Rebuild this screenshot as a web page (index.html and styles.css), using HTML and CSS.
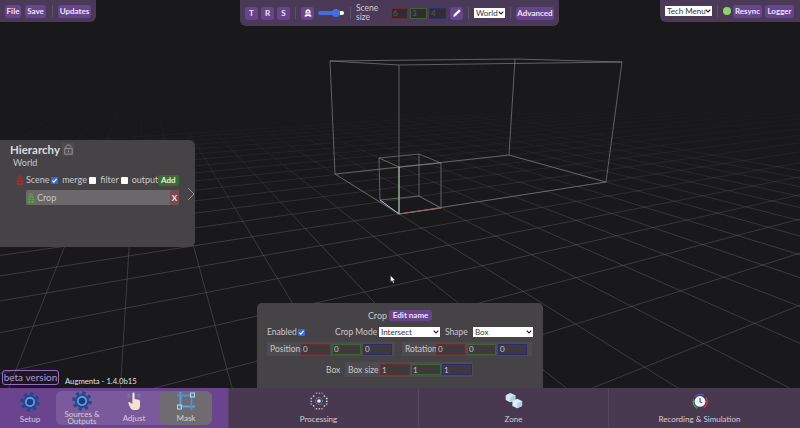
FILE: index.html
```html
<!DOCTYPE html>
<html lang="en">
<head>
<meta charset="utf-8">
<title>Augmenta</title>
<link rel="stylesheet" href="styles.css">
</head>
<body>
<div class="app">
  <svg class="scene" viewBox="0 0 800 428" aria-hidden="true">
    <defs>
      <linearGradient id="fade" gradientUnits="userSpaceOnUse" x1="0" y1="85" x2="0" y2="240">
        <stop offset="0" stop-color="#000"/>
        <stop offset="0.3" stop-color="#222"/>
        <stop offset="1" stop-color="#fff"/>
      </linearGradient>
      <mask id="fade-mask" maskUnits="userSpaceOnUse" x="0" y="0" width="800" height="428">
        <rect width="800" height="428" fill="url(#fade)"/>
      </mask>
    </defs>
    <g mask="url(#fade-mask)" class="grid">
      <path d="M141 53L-1255 428M141 53L-1130 428M141 53L-1005 428M141 53L-880 428M141 53L-756 428M141 53L-631 428M141 53L-506 428M141 53L-381 428M141 53L-256 428M141 53L-132 428M141 53L-7 428M141 53L118 428M141 53L243 428M141 53L368 428M141 53L492 428M141 53L617 428M141 53L742 428M141 53L867 428M141 53L992 428M141 53L1116 428M141 53L1241 428M141 53L1366 428M141 53L1491 428M141 53L1616 428M141 53L1740 428M141 53L1865 428M141 53L1990 428M141 53L2115 428M141 53L2240 428"/>
      <path d="M1430 54L983 428M1430 54L738 428M1430 54L492 428M1430 54L247 428M1430 54L2 428M1430 54L-244 428M1430 54L-489 428M1430 54L-735 428M1430 54L-980 428M1430 54L-1225 428M1430 54L-1471 428M1430 54L-1716 428M1430 54L-1962 428M1430 54L-2207 428M1430 54L-2452 428M1430 54L-2698 428M1430 54L-2943 428M1430 54L-3189 428M1430 54L-3434 428M1430 54L-3679 428M1430 54L-3925 428M1430 54L-4170 428M1430 54L-4416 428"/>
    </g>
    <path class="wire" d="M330 61L399 65L622 62L515 59L330 61M330 61L335 174L399 214L606 182L509 155L335 174M399 65V214M622 62L606 182M515 59L509 155"/>
    <path class="wire" d="M379 158L419 154L441 163L399 167L379 158M379 158L380 200L399 214L441 208L419 196L380 200M441 163V208M419 154V196"/>
    <path class="axis-g" d="M399 167V214"/>
    <path class="axis-r" d="M399 214L441 208"/>
    <path class="axis-b" d="M380 200L399 214"/>
  </svg>

  <svg class="cursor" viewBox="0 0 6 9" aria-hidden="true"><path d="M0.5 0.5V7L2 5.6L3.2 8.2L4.3 7.7L3.2 5.2H5.2Z"/></svg>

  <div class="panel top-left">
    <button class="btn">File</button>
    <button class="btn">Save</button>
    <span class="sep"></span>
    <button class="btn">Updates</button>
  </div>

  <div class="panel top-center">
    <button class="btn square">T</button>
    <button class="btn square">R</button>
    <button class="btn square">S</button>
    <span class="sep"></span>
    <button class="btn square icon-btn">
      <svg viewBox="0 0 12 12" width="10" height="10"><path d="M3 6.5V4.5C3 2.8 4.3 1.5 6 1.5S9 2.8 9 4.5V6.5Z" fill="#fff"/><circle cx="6" cy="4.4" r="1" fill="#6a4390"/><path d="M1.5 10L3.2 7.5H8.8L10.5 10L8.5 10.6L6 9.4L3.5 10.6Z" fill="#fff"/></svg>
    </button>
    <input class="slider" type="range" min="0" max="100" value="75" aria-label="Speed">
    <span class="sep"></span>
    <span class="scene-size">Scene size</span>
    <span class="size-inputs">
      <input class="field red dim" value="6" aria-label="X">
      <input class="field green dim" value="3" aria-label="Y">
      <input class="field blue dim" value="4" aria-label="Z">
    </span>
    <button class="btn square icon-btn">
      <svg viewBox="0 0 12 12" width="10" height="10"><path d="M1.5 10.5L2.2 7.8L8.4 1.6L10.4 3.6L4.2 9.8Z" fill="#fff"/></svg>
    </button>
    <span class="sep"></span>
    <select class="select world" aria-label="Space"><option>World</option></select>
    <span class="sep"></span>
    <button class="btn advanced">Advanced</button>
  </div>

  <div class="panel top-right">
    <select class="select tech" aria-label="Tech menu"><option>Tech Menu</option></select>
    <span class="sep"></span>
    <span class="status"></span>
    <button class="btn">Resync</button>
    <button class="btn">Logger</button>
  </div>

  <section class="hierarchy">
    <header class="h-title">
      <h1>Hierarchy</h1>
      <span class="h-lock">
        <svg viewBox="0 0 12 12" width="11" height="11"><path d="M3.2 5V3C3.2 1.8 4.4 1 6 1S8.8 1.8 8.8 3V3.6" fill="none" stroke="#9a989b" stroke-width="1"/><rect x="2" y="5" width="8" height="6" fill="none" stroke="#9a989b"/><rect x="5.3" y="7" width="1.4" height="2" fill="#9a989b"/></svg>
      </span>
    </header>
    <div class="h-world">World</div>
    <div class="h-row">
      <svg class="node-icon" viewBox="0 0 8 10" width="8" height="10"><path d="M2.6 2V1H5.4V2" fill="none" stroke="#9a3434"/><path d="M1 10C0.3 6 0.8 2 4 2S7.7 6 7 10Z" fill="#9a3434"/><path d="M1 5H7M1 7.5H7M4 2V10" stroke="#5a2c2e" stroke-width="0.4"/></svg>
      <span class="h-scene">Scene</span>
      <input class="check" type="checkbox" checked aria-label="merge">
      <span class="h-merge">merge</span>
      <input class="check" type="checkbox" aria-label="filter">
      <span class="h-filter">filter</span>
      <input class="check" type="checkbox" aria-label="output">
      <span class="h-output">output</span>
      <button class="add">Add</button>
    </div>
    <div class="h-node">
      <svg class="node-icon" viewBox="0 0 8 10" width="8" height="10"><path d="M2.6 2V1H5.4V2" fill="none" stroke="#5fa04a"/><path d="M1 10C0.3 6 0.8 2 4 2S7.7 6 7 10Z" fill="#5fa04a"/><path d="M1 5H7M1 7.5H7M4 2V10" stroke="#39602f" stroke-width="0.4"/></svg>
      <span class="node-name">Crop</span>
      <button class="remove">X</button>
    </div>
    <svg class="chevron" viewBox="0 0 8 14" width="8" height="14"><path d="M1 1L7 7L1 13" fill="none" stroke="#8d8b8e" stroke-width="1"/></svg>
  </section>

  <section class="crop">
    <div class="crop-title"><span>Crop</span><button class="btn edit">Edit name</button></div>
    <div class="crop-row">
      <span class="lbl-enabled">Enabled</span>
      <input class="check" type="checkbox" checked aria-label="Enabled">
      <span class="lbl-mode">Crop Mode</span>
      <select class="select mode" aria-label="Crop mode"><option>Intersect</option></select>
      <span class="lbl-shape">Shape</span>
      <select class="select shape" aria-label="Shape"><option>Box</option></select>
    </div>
    <div class="crop-row vectors">
      <div class="vector">
        <span class="vec-label">Position</span>
        <input class="field red" value="0" aria-label="Position X">
        <input class="field green" value="0" aria-label="Position Y">
        <input class="field blue" value="0" aria-label="Position Z">
      </div>
      <div class="vector">
        <span class="vec-label">Rotation</span>
        <input class="field red" value="0" aria-label="Rotation X">
        <input class="field green" value="0" aria-label="Rotation Y">
        <input class="field blue" value="0" aria-label="Rotation Z">
      </div>
    </div>
    <div class="crop-row box-row">
      <span class="lbl-box">Box</span>
      <div class="vector box-vector">
        <span class="vec-label">Box size</span>
        <input class="field red" value="1" aria-label="Box X">
        <input class="field green" value="1" aria-label="Box Y">
        <input class="field blue" value="1" aria-label="Box Z">
      </div>
    </div>
  </section>

  <div class="beta">beta version</div>
  <div class="version">Augmenta - 1.4.0b15</div>

  <nav class="nav">
    <div class="nav-main">
      <a class="tab tab-setup">
        <svg class="tab-icon" viewBox="0 0 24 24" width="20" height="20"><use href="#gear"/></svg>
        <span>Setup</span>
      </a>
      <div class="tab-group">
        <a class="tab">
          <svg class="tab-icon" viewBox="0 0 24 24" width="20" height="20">
            <g id="gear"><circle cx="12" cy="12" r="8.5" fill="#24478c"/><circle cx="12" cy="12" r="10" fill="none" stroke="#24478c" stroke-width="3.4" stroke-dasharray="4 3.85"/><circle cx="12" cy="12" r="5" fill="#1f3c7c" stroke="#5ba6ef" stroke-width="2"/></g>
          </svg>
          <span class="two-line">Sources &amp; Outputs</span>
        </a>
        <a class="tab">
          <svg class="tab-icon" viewBox="0 0 20 20" width="20" height="20">
            <path d="M8.4 8V2.6C8.4 1.2 10.6 1.2 10.6 2.6V8L14.5 8.8C15.8 9.1 16 10 16 11V15C16 17 15 19 12 19H9.5C8 19 7 18 6.2 16.6L4.4 12.5C4 11.4 5.2 10.6 6.2 11.4L8.4 13Z" fill="#f2e2d0"/>
            <path d="M3.5 3L6 4.4M3.5 5.8L6 4.4M16.5 3L13 4.4M16.5 5.8L13 4.4" stroke="#5b8fd6" stroke-width="1" fill="none"/>
          </svg>
          <span>Adjust</span>
        </a>
        <a class="tab active">
          <svg class="tab-icon" viewBox="0 0 20 20" width="20" height="20">
            <path d="M4.5 1V15.5H19" fill="none" stroke="#5ba2e6" stroke-width="1.8"/>
            <path d="M1 4.5H15.5V19" fill="none" stroke="#4f90d8" stroke-width="1.8"/>
            <rect x="1.5" y="14" width="4" height="4" fill="none" stroke="#b5dcf7" stroke-width="1"/>
            <rect x="14.5" y="2" width="4" height="4" fill="none" stroke="#b5dcf7" stroke-width="1"/>
          </svg>
          <span>Mask</span>
        </a>
      </div>
    </div>
    <a class="tab wide shifted">
      <svg class="tab-icon" viewBox="0 0 20 20" width="20" height="20">
        <circle cx="10" cy="10" r="2" fill="#e4f4fb"/>
        <circle cx="10" cy="10" r="3.8" fill="none" stroke="#7f9ab5" stroke-width="1.2" stroke-dasharray="1 1"/>
        <g stroke-width="1.8" stroke-dasharray="1.6 1.6" fill="none">
          <path d="M6.4 1.4H14" stroke="#e07a7a"/><path d="M6.4 18.6H14" stroke="#e8b888"/>
          <path d="M1.4 6.4V14" stroke="#94c0ea"/><path d="M18.6 6.4V14" stroke="#e6e6e6"/>
          <path d="M3.5 4L5.6 6M16.5 4L14.4 6M3.5 16L5.6 14M16.5 16L14.4 14" stroke="#c2d0de"/>
        </g>
      </svg>
      <span>Processing</span>
    </a>
    <a class="tab wide">
      <svg class="tab-icon" viewBox="0 0 20 20" width="20" height="20">
        <path d="M6 1L11.5 3.5V9L6 11.5L0.8 9V3.5Z" fill="#cfe6f4"/>
        <path d="M6 6L11.5 3.5V9L6 11.5Z" fill="#a9cfe8"/>
        <path d="M13.5 7.5L19 10V15.5L13.5 18L8.2 15.5V10Z" fill="#dcedf8"/>
        <path d="M13.5 12.5L19 10V15.5L13.5 18Z" fill="#afd5ec"/>
      </svg>
      <span>Zone</span>
    </a>
    <a class="tab wide shifted last">
      <svg class="tab-icon" viewBox="0 0 20 20" width="20" height="20">
        <circle cx="10" cy="10.5" r="6" fill="#eef3f6"/>
        <path d="M10 6.8V10.8L12.4 12" fill="none" stroke="#2d4f88" stroke-width="1.2"/>
        <path d="M4.5 5.5A8 8 0 0 1 14.5 3.5" fill="none" stroke="#3b62b5" stroke-width="1.8"/>
        <path d="M16.6 6A8 8 0 0 1 14 17.5" fill="none" stroke="#bf3b3b" stroke-width="1.8"/>
        <path d="M3 8A8 8 0 0 0 7 18" fill="none" stroke="#3c9b4a" stroke-width="1.8"/>
      </svg>
      <span>Recording &amp; Simulation</span>
    </a>
  </nav>
</div>
</body>
</html>
```

FILE: styles.css
```css
* { box-sizing: border-box; }
html, body { margin: 0; padding: 0; background: #19181a; }
body { width: 800px; height: 428px; overflow: hidden; font-family: "Lato", "Liberation Sans", sans-serif; color: #c9c7ca; font-size: 9px; }
button, input, select { font-family: inherit; margin: 0; }
.app { position: relative; width: 800px; height: 428px; overflow: hidden; display: flex; flex-direction: column; justify-content: flex-end; }

.scene { position: absolute; left: 0; top: 0; width: 800px; height: 428px; }
.grid path { fill: none; stroke: #757478; stroke-width: 0.7; stroke-opacity: 0.55; }
.wire { fill: none; stroke: #7f7e81; stroke-width: 0.7; }
.axis-g, .axis-r, .axis-b { fill: none; stroke-width: 1; }
.axis-g { stroke: #a9dca0; }
.axis-r { stroke: #a85f62; }
.axis-b { stroke: #a7b4de; }
.cursor { position: absolute; left: 390px; top: 275px; width: 6px; height: 9px; }
.cursor path { fill: #fff; stroke: #222; stroke-width: 0.4; }

.panel { position: absolute; top: 0; display: flex; align-items: center; background: #4a3a58; }
.top-left { left: 0; width: 96px; height: 22px; padding: 0 5px; border-bottom-right-radius: 6px; }
.top-center { left: 240px; width: 319px; height: 26px; padding: 0 5px; border-radius: 0 0 6px 6px; }
.top-right { left: 660px; width: 140px; height: 22px; padding: 0 6px 0 5px; border-bottom-left-radius: 6px; }

.btn { height: 13px; padding: 0 3px; border: 0; border-radius: 3px; background: #6a4390; color: #e9e6ec; font-size: 8px; font-weight: 700; line-height: 13px; white-space: nowrap; }
.top-left .btn:nth-child(1) { width: 16px; padding: 0; }
.top-left .btn:nth-child(2) { width: 21px; margin-left: 4px; padding: 0; }
.top-left .btn:nth-child(4) { width: 33px; padding: 0; }
.top-left .sep { margin: 0 5px 0 6px; }
.sep { width: 1px; height: 12px; background: #5d5068; flex: none; }
.square { width: 13px; padding: 0; flex: none; display: flex; align-items: center; justify-content: center; }
.top-center .square + .square { margin-left: 3px; }
.top-center .sep:nth-of-type(1) { margin: 0 5px 0 5px; }
.icon-btn { margin-left: 0; }
.slider { appearance: none; -webkit-appearance: none; width: 26px; height: 9px; margin: 0 6px 0 4px; background: transparent; flex: none; }
.slider::-webkit-slider-runnable-track { height: 4px; border-radius: 2px; background: linear-gradient(to right, #3f6fe0 85%, #fff 85%); }
.slider::-webkit-slider-thumb { -webkit-appearance: none; appearance: none; width: 8px; height: 8px; margin-top: -2px; border-radius: 50%; background: #3f6fe0; }
.scene-size { width: 24px; margin-left: 5px; font-size: 8.5px; line-height: 9px; color: #cfcdd2; flex: none; }
.size-inputs { display: flex; gap: 2px; margin-left: 10px; padding: 1px; }
.size-inputs .field { width: 17px; height: 11px; }
.top-center > .sep:nth-of-type(n+3) { margin: 0 5px; }
.top-center > .size-inputs + .btn { margin-left: 3px; }
.select { appearance: none; -webkit-appearance: none; height: 10px; padding: 0 6px 0 2px; border: 0; border-radius: 0; background: #fff url("data:image/svg+xml,%3Csvg xmlns='http://www.w3.org/2000/svg' width='6' height='4'%3E%3Cpath d='M.7.7L3 3l2.3-2.3' fill='none' stroke='%23222' stroke-width='1.1'/%3E%3C/svg%3E") no-repeat right 1px center; color: #333; font-size: 8px; line-height: 10px; }
.world { width: 31px; flex: none; }
.advanced { width: 38px; padding: 0; }
.tech { width: 47px; flex: none; }
.top-right .sep { margin: 0 5px; }
.status { width: 8px; height: 8px; margin-right: 2px; border-radius: 50%; background: #8ed36a; flex: none; }
.top-right .btn { width: 29px; height: 13px; padding: 0; }
.top-right .btn + .btn { margin-left: 3px; }

.field { height: 11px; padding: 0 1px; border: 1px solid; border-radius: 0; background: #3c3a3d; color: #c8c6c9; font-size: 8px; line-height: 9px; outline: 0; }
.field.red { border-color: #6d2a2c; }
.field.green { border-color: #3c6531; }
.field.blue { border-color: #2c2a70; }
.field.dim { background: #2f2d31; color: #5b595d; }
.check { appearance: none; -webkit-appearance: none; width: 7px; height: 7px; flex: none; border-radius: 1px; background: #fff; }
.check:checked { background: #2f6ae0 url("data:image/svg+xml,%3Csvg xmlns='http://www.w3.org/2000/svg' width='7' height='7'%3E%3Cpath d='M1.4 3.6L2.9 5.1L5.6 1.8' fill='none' stroke='%23fff' stroke-width='1.2'/%3E%3C/svg%3E") no-repeat center; }

.hierarchy { position: absolute; left: 0; top: 140px; width: 195px; height: 107px; padding: 2px 16px 0 10px; background: #454346; border-radius: 0 6px 6px 0; }
.h-title { display: flex; align-items: center; height: 15px; }
.h-title h1 { margin: 0; width: 52px; font-size: 11.5px; line-height: 15px; font-weight: 700; color: #dcdadd; white-space: nowrap; }
.h-lock { display: flex; align-items: center; justify-content: center; width: 12px; height: 13px; background: #4e4c4f; }
.h-world { margin: 0 0 0 3px; height: 11px; line-height: 11px; font-size: 9px; }
.h-row { display: flex; align-items: center; height: 12px; margin: 6px 0 0 6px; }
.node-icon { flex: none; }
.h-row span { font-size: 9px; line-height: 12px; white-space: nowrap; }
.h-scene { width: 26px; margin-left: 2px; }
.h-merge { width: 28px; margin-left: 4px; }
.h-filter { width: 21px; margin-left: 4px; }
.h-output { width: 26px; margin-left: 4px; }
.add { width: 22px; height: 11px; padding: 0; border: 0; border-radius: 3px; background: #3e6a35; color: #e4efe0; font-size: 8px; font-weight: 700; line-height: 11px; }
.h-node { display: flex; align-items: center; width: 153px; height: 15px; margin: 4px 0 0 16px; padding: 0 0 0 1px; border-radius: 2px; background: #6a686b; }
.node-name { margin-left: 2px; flex: 1; font-size: 9px; }
.remove { width: 9px; height: 15px; padding: 0; border: 0; border-radius: 2px; background: #7a4a4c; color: #eee; font-size: 8px; font-weight: 700; }
.chevron { position: absolute; left: 187px; top: 47px; }

.crop { position: absolute; left: 257px; top: 303px; width: 286px; height: 85px; padding-top: 7px; background: #454346; border-radius: 5px 5px 0 0; }
.crop-title { display: flex; justify-content: center; align-items: center; gap: 2px; height: 11px; font-size: 9px; }
.edit { height: 11px; width: 43px; padding: 0; line-height: 11px; }
.crop-row { display: flex; align-items: center; font-size: 8.5px; white-space: nowrap; }
.crop-title + .crop-row { height: 10px; margin-top: 6px; padding-left: 10px; }
.lbl-enabled { width: 31px; }
.lbl-mode { margin-left: 30px; width: 44px; }
.lbl-shape { margin-left: 5px; width: 28px; }
.mode { width: 61px; }
.shape { width: 60px; }
.vectors { height: 14px; margin-top: 5px; padding-left: 10px; gap: 7px; }
.vector { display: flex; align-items: center; width: 128px; height: 14px; padding-left: 3px; gap: 2px; background: #4d4b4e; }
.vector + .vector { width: 130px; }
.vec-label { width: 29px; flex: none; font-size: 8.5px; }
.vector .field { width: 29px; flex: none; }
.box-row { height: 15px; margin-top: 6px; padding-left: 69px; }
.lbl-box { width: 19px; }
.box-vector { height: 15px; }
.box-vector .vec-label { width: 30px; }
.box-vector .field { width: 30px; }
.box-vector .field + .field { margin-left: -1px; }

.beta { position: absolute; left: 2px; top: 370px; width: 57px; height: 15px; border: 1px solid #9a68c6; border-radius: 3px; color: #b892dc; font-size: 10px; line-height: 13px; text-align: center; }
.version { position: absolute; left: 65px; top: 376px; font-size: 7.7px; line-height: 10px; color: #e2e0e3; white-space: nowrap; }

.nav { position: relative; display: flex; height: 40px; background: #483850; }
.nav-main { display: flex; width: 228px; height: 40px; padding: 3px 16px 3px 8px; background: #6b4490; flex: none; }
.tab { display: flex; flex-direction: column; align-items: center; color: #d3cfd6; font-size: 8px; line-height: 7px; }
.tab-setup { width: 44px; margin-right: 4px; }
.tab-group { display: flex; width: 156px; border-radius: 6px; background: #7b5a9c; overflow: hidden; }
.tab-group .tab { width: 52px; }
.tab.active { background: #6e6c70; border-radius: 6px; }
.tab-icon { flex: none; margin-bottom: 4px; }
.tab-setup .tab-icon { margin-top: 1px; }
.two-line { text-align: center; width: 48px; margin-top: -4px; }
.tab.wide { flex: none; width: 190px; height: 40px; padding-top: 4px; border-left: 1px solid #554660; }
.tab.wide.last { width: 192px; }
.tab.wide .tab-icon { margin-bottom: 6px; width: 18px; height: 18px; }
.tab.shifted { padding-right: 10px; }
```
